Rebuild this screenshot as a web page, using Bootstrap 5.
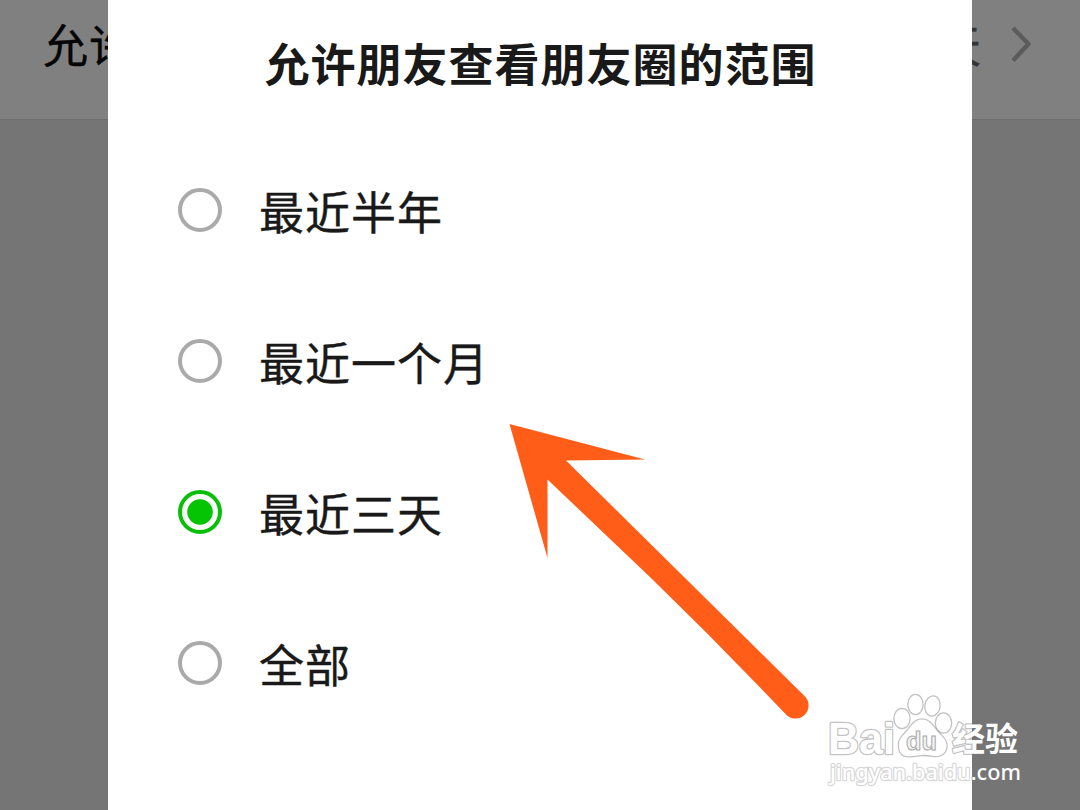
<!DOCTYPE html>
<html lang="zh-CN">

<head>
    <meta charset="utf-8">
    <meta name="viewport" content="width=device-width, initial-scale=1">
    <title>允许朋友查看朋友圈的范围</title>
    <link rel="stylesheet" href="https://cdn.jsdelivr.net/npm/bootstrap@5.3.0/dist/css/bootstrap.min.css">
    <style>
        body {
            background-color: #757575;
            font-family: "Noto Sans CJK SC", sans-serif;
            font-size: 45px;
            letter-spacing: 1px;
            line-height: 68px;
            color: #191919;
        }

        .screen {
            height: 810px;
        }

        .setting-row {
            height: 120px;
            padding: 10px 48px 0 43px;
            background-color: #808080;
            border-bottom: 1px solid #6e6e6e;
            color: #050505;
        }

        .setting-label,
        .setting-value {
            -webkit-text-stroke: 0.4px currentColor;
        }

        .setting-value {
            color: #353535;
            margin-right: 28px;
        }

        .range-dialog {
            width: 864px;
            height: 810px;
        }

        .range-title {
            padding-top: 29px;
            padding-left: 1px;
            font-size: 45px;
            line-height: 68px;
        }

        .range-list {
            margin-top: 37px;
            padding-left: 70px;
        }

        .range-option {
            height: 151px;
            gap: 37px;
            -webkit-text-stroke: 0.4px #191919;
        }

        .range-option .form-check-input {
            width: 44px;
            height: 44px;
            margin: 0;
            border: 4px solid #aaa;
            background-image: none;
        }

        .range-option .form-check-input:checked {
            border-color: #0abf0a;
            background-color: #fff;
            background-image: radial-gradient(circle, #04c404 12.3px, #fff 13.2px);
            background-size: 36px 36px;
        }

        .range-option label {
            padding-top: 2px;
        }
    </style>
</head>

<body>
    <main class="screen position-relative overflow-hidden">
        <!-- Dimmed settings row -->
        <div class="setting-row d-flex align-items-start justify-content-between">
            <span class="setting-label">允许</span>
            <div class="d-flex align-items-start">
                <span class="setting-value">天</span>
                <svg width="22" height="68" viewBox="0 0 22 68" fill="none" stroke="#5b5b5b" stroke-width="4.4">
                    <path d="M3 18L18.500 34L3 50.500" stroke-linejoin="round" />
                </svg>
            </div>
        </div>

        <!-- Dialog -->
        <section class="range-dialog bg-white position-absolute top-0 start-50 translate-middle-x">
            <h1 class="range-title text-center fw-bold mb-0">允许朋友查看朋友圈的范围</h1>
            <form class="range-list">
                <div class="range-option d-flex align-items-center">
                    <input class="form-check-input" type="radio" name="range" id="halfYear">
                    <label for="halfYear">最近半年</label>
                </div>
                <div class="range-option d-flex align-items-center">
                    <input class="form-check-input" type="radio" name="range" id="oneMonth">
                    <label for="oneMonth">最近一个月</label>
                </div>
                <div class="range-option d-flex align-items-center">
                    <input class="form-check-input" type="radio" name="range" id="threeDays" checked>
                    <label for="threeDays">最近三天</label>
                </div>
                <div class="range-option d-flex align-items-center">
                    <input class="form-check-input" type="radio" name="range" id="all">
                    <label for="all">全部</label>
                </div>
            </form>
        </section>

        <!-- Arrow and watermark lie over the dialog -->
        <svg class="position-absolute top-0 start-0 pe-none" width="1080" height="810" viewBox="0 0 1080 810" letter-spacing="0">
            <path fill="#ff5d18" d="M509.5 424L645 459.5L566 460.5L805 696.5A13 13 0 0 1 786 714.5Q720 645 651 578L547.5 479.5V558Z" />
            <g fill="#fff" stroke="#777" stroke-opacity=".45" stroke-width="2.6" paint-order="stroke" stroke-linejoin="round">
                <text x="828" y="754" font-family="Liberation Sans, sans-serif" font-size="44" font-weight="700" textLength="67" lengthAdjust="spacingAndGlyphs">Bai</text>
                <text x="952" y="751" font-family="Noto Sans CJK SC, sans-serif" font-size="33" font-weight="700" textLength="66" lengthAdjust="spacingAndGlyphs">经验</text>
                <text x="830" y="780" font-family="Noto Sans, sans-serif" font-size="22.5" font-weight="500" stroke-opacity=".3" textLength="191" lengthAdjust="spacingAndGlyphs">jingyan.baidu.com</text>
                <ellipse cx="902" cy="718.5" rx="7.5" ry="9.5" />
                <ellipse cx="915.5" cy="704.5" rx="7" ry="9.5" />
                <ellipse cx="932.5" cy="706" rx="7" ry="9.5" transform="rotate(8 932.5 706)" />
                <ellipse cx="943.5" cy="723" rx="7.5" ry="9.5" />
                <path d="M922 719.5C929 719.5 933 726 937 731C941 736 946.500 739 946.500 745.500C946.500 753 941 756.500 934 756C929 755.500 926 754.500 921 755C914 756 911 756.500 906 756C900 755 898.500 749 899 743.500C899.500 738 904 735 908 730C912 725 915 719.500 922 719.500Z" />
            </g>
            <text x="906" y="749.5" font-family="Liberation Sans, sans-serif" font-size="25.5" font-weight="700" textLength="31" lengthAdjust="spacingAndGlyphs" fill="#f2f2f2" stroke="#aaa" stroke-width="1">du</text>
        </svg>
    </main>
    <script src="https://cdn.jsdelivr.net/npm/bootstrap@5.3.0/dist/js/bootstrap.bundle.min.js"></script>
</body>

</html>
